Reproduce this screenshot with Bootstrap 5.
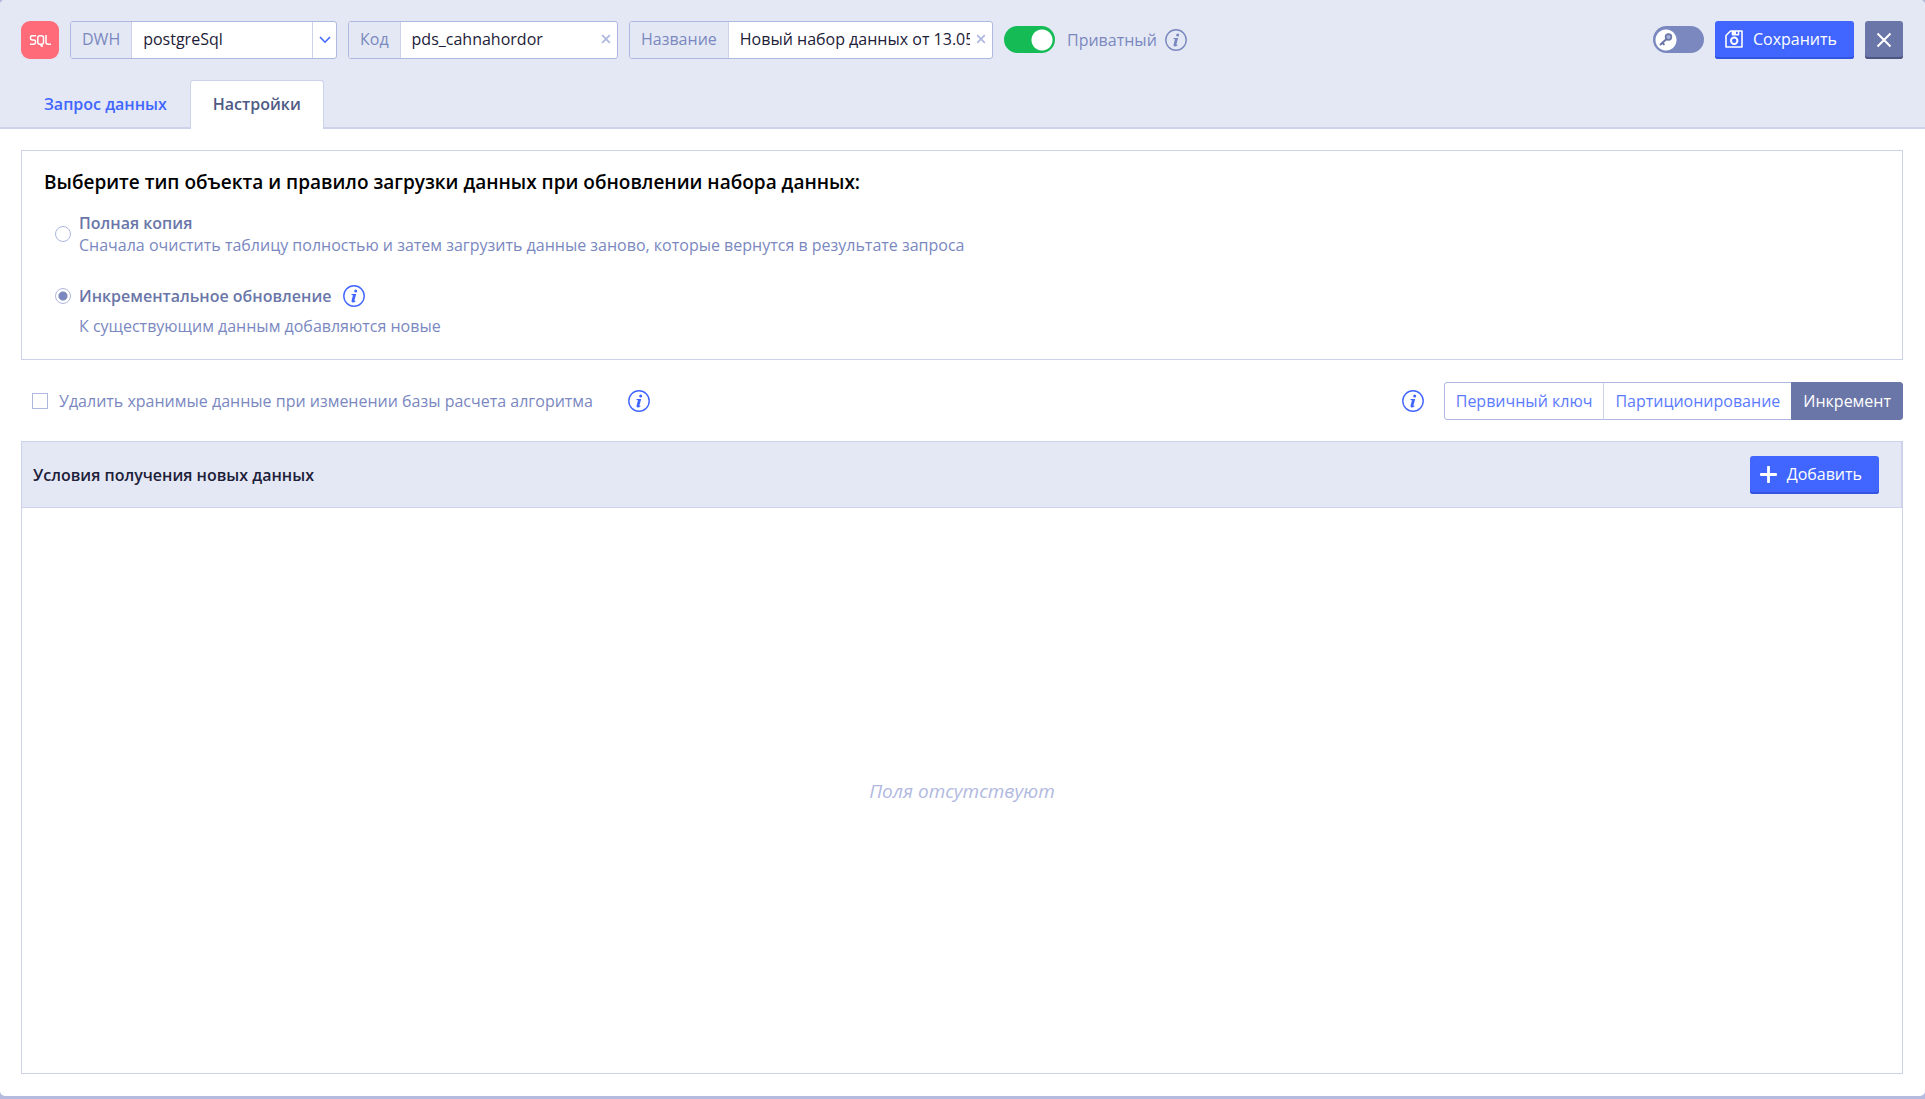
<!DOCTYPE html>
<html lang="ru">
<head>
<meta charset="utf-8">
<meta name="viewport" content="width=device-width, initial-scale=1">
<title>Набор данных — Настройки</title>
<link href="https://cdn.jsdelivr.net/npm/bootstrap@5.3.0/dist/css/bootstrap.min.css" rel="stylesheet">
<style>
:root{--line:#cbd2ea;--line-strong:#adb7df;--muted:#7a88bf;--accent:#4066ff;--slate:#6a76a8;--head:#e4e8f4}
body{font-family:"Open Sans","Noto Sans",sans-serif;font-size:16px;line-height:22px;color:#1c2038;background:#b4bbdf}
.app-window{background:#fff;border-radius:5px;min-height:calc(100vh - 3px);overflow:hidden}
.app-head{background:var(--head);border-bottom:2px solid var(--line)}
.edge{padding-left:21px;padding-right:22px}
.toolbar-row{padding-top:21px;padding-bottom:21px;gap:11px}
.sql-tile{width:38px;height:38px;border-radius:9px;background:#ff6b78}
.field-box{height:38px;border:1px solid var(--line-strong);border-radius:3px;background:#fff;overflow:hidden}
.field-box label{background:var(--head);color:var(--muted);border-right:1px solid var(--line);padding:0 11px 2px}
.field-box .form-control,.field-box .form-select{border:0;border-radius:0;padding:0 0 2px 11px;font-size:16px;color:#1c2038;background:none;box-shadow:none;height:100%;min-width:0}
.w-dwh{width:267px}.w-code{width:270px}.w-name{width:364px}
.arrow-cell{width:24px;border-left:1px solid var(--line);pointer-events:none}
.clear-btn{width:22px;border:0;background:none;padding:0 0 2px;color:var(--line-strong)}
.switch-wrap{margin-bottom:1px}
.form-switch .form-check-input.pill{width:51px;height:27px;margin:0;border:0;background-color:#15bb55;background-image:radial-gradient(circle,#fff 10px,transparent 11px);background-size:22px 22px;background-repeat:no-repeat;background-position:27px center;border-radius:14px}
.form-switch .form-check-input.pill.key-pill{background-color:var(--muted);background-position:2px center}
.key-mark{position:absolute;left:6px;top:7px;pointer-events:none}
.info-btn{border:0;background:none;padding:0;color:var(--accent);line-height:0}
.info-btn.dim{color:var(--muted)}
.btn-solid{height:38px;border:0;border-radius:3px;background:var(--accent);color:#fff;font-size:16px;line-height:22px;padding:0 17px 2px 10px;gap:10px;box-shadow:inset 0 -2px #3155e0}
.btn-solid:hover{background:#3459f0;color:#fff}
.btn-shut{width:38px;height:38px;border:0;border-radius:3px;padding:0;background:var(--slate);box-shadow:inset 0 -2px #4c5680}
.nav-tabs.main-tabs{border:0;margin-bottom:-2px}
.main-tabs .nav-link{border:1px solid transparent;border-bottom:0;border-radius:3px 3px 0 0;margin:0;padding:12px 22px 14px;height:49px;font-weight:600;color:var(--accent)}
.main-tabs .nav-link.active{background:#fff;border-color:var(--line);color:#4f5a85}
.page-body{padding-top:21px;padding-bottom:22px}
.rule-box{border:1px solid var(--line);padding:17px 22px 22px}
.rule-title{font-size:19px;line-height:28px;font-weight:600;color:#000;margin:0 0 16px}
.opt{padding-left:11px;gap:8px;color:var(--slate)}
.opt-first{margin-bottom:25px}
.opt-name{font-weight:600}
.opt-note{color:var(--muted)}
.form-check-input.tick{flex:none;width:16px;height:16px;margin:0;border-color:var(--line-strong);background-color:#fff}
.form-check-input.tick[type=radio]:checked{border-color:var(--line-strong);background-color:#fff;background-image:radial-gradient(circle,var(--muted) 4px,transparent 5px)}
.form-check-input.tick[type=checkbox]{border-radius:0}
.option-bar{margin:22px 0 21px}
.option-bar .opt{gap:11px}
.mode-group .btn{height:38px;font-size:16px;line-height:22px;padding:7px 11px;border:1px solid var(--line-strong);border-radius:3px;color:#5b7bff;background:#fff}
.mode-group .btn+.btn{border-left-color:var(--line)}
.mode-group .btn.active{background:var(--slate);color:#fff;border-color:var(--slate)}
.cond-box{border:1px solid var(--line)}
.cond-head{background:var(--head);border-bottom:1px solid var(--line);border-right:1px solid var(--line);padding:14px 22px 13px 11px}
.cond-title{font-size:16px;line-height:22px;font-weight:600;margin:0}
.empty-note{font-size:19px;line-height:28px;font-style:italic;color:#b1b9df}
</style>
</head>
<body>
<svg class="d-none" xmlns="http://www.w3.org/2000/svg">
  <symbol id="i-info" viewBox="0 0 22 22"><circle cx="11" cy="11" r="10.2" fill="none" stroke="currentColor" stroke-width="1.4"/><circle cx="12.7" cy="5.9" r="1.5" fill="currentColor"/><path d="M8.6 9.1h4.6l-1.8 6.3q-.1.6.9.2l.1.8q-1.4 1.3-2.9 1.1-1.4-.3-.9-2l1.4-5.3-1.5-.2z" fill="currentColor"/></symbol>
  <symbol id="i-clear" viewBox="0 0 10 10"><path d="M1.2 1.2l7.6 7.6M8.8 1.2L1.2 8.8" stroke="currentColor" stroke-width="1.7"/></symbol>
</svg>
<div class="app-window d-flex flex-column">
  <header class="app-head">
    <div class="toolbar-row edge d-flex align-items-center">
      <div class="sql-tile d-flex align-items-center justify-content-center flex-shrink-0">
        <svg width="23" height="13" viewBox="0 0 23 13" fill="none" stroke="#fff" stroke-width="1.5" stroke-linejoin="round" role="img" aria-label="SQL"><path d="M7 1.8H3Q1.5 1.8 1.5 3.2V4.6Q1.5 6 3 6H5Q6.5 6 6.5 7.4V8.8Q6.5 10.2 5 10.2H1M10.8 1.8H12.5Q14.5 1.8 14.5 3.8V8.2Q14.5 10.2 12.5 10.2H10.8Q8.8 10.2 8.8 8.2V3.8Q8.8 1.8 10.8 1.8M12.2 10.2V12H14M17 1V8.2Q17 10.2 19 10.2H22"/></svg>
      </div>
      <div class="field-box w-dwh d-flex">
        <label for="dwh" class="d-flex align-items-center">DWH</label>
        <select id="dwh" class="form-select"><option>postgreSql</option></select>
        <span class="arrow-cell d-flex align-items-center justify-content-center flex-shrink-0"><svg width="12" height="8" viewBox="0 0 12 8"><path d="M1 1l5 5.2L11 1" fill="none" stroke="#4066ff" stroke-width="1.6"/></svg></span>
      </div>
      <div class="field-box w-code d-flex">
        <label for="code" class="d-flex align-items-center">Код</label>
        <input id="code" class="form-control" type="text" value="pds_cahnahordor">
        <button type="button" class="clear-btn d-flex align-items-center justify-content-center flex-shrink-0" aria-label="Очистить код"><svg width="10" height="10"><use href="#i-clear"/></svg></button>
      </div>
      <div class="field-box w-name d-flex">
        <label for="title" class="d-flex align-items-center">Название</label>
        <input id="title" class="form-control" type="text" value="Новый набор данных от 13.05.2024">
        <button type="button" class="clear-btn d-flex align-items-center justify-content-center flex-shrink-0" aria-label="Очистить название"><svg width="10" height="10"><use href="#i-clear"/></svg></button>
      </div>
      <div class="form-switch switch-wrap d-flex align-items-center p-0 gap-2">
        <input class="form-check-input pill" type="checkbox" role="switch" id="private" checked>
        <label for="private" class="opt-note ps-1">Приватный</label>
        <button type="button" class="info-btn dim" aria-label="Справка о приватности"><svg width="22" height="22"><use href="#i-info"/></svg></button>
      </div>
      <div class="form-switch switch-wrap position-relative p-0 ms-auto d-flex">
        <input class="form-check-input pill key-pill" type="checkbox" role="switch" id="keymode" aria-label="Режим ключа">
        <svg class="key-mark" width="14" height="14" viewBox="0 0 14 14" fill="none" stroke="#6a76a8"><circle cx="9.5" cy="4" r="2.9" fill="#a9b2da" stroke-width="1.6"/><path d="M7.3 6.2L1.5 11.5M3.6 10l1.2 1.2" stroke-width="2" stroke-linecap="round"/></svg>
      </div>
      <button type="button" class="btn btn-solid d-flex align-items-center">
        <svg width="18" height="18" viewBox="0 0 18 18" fill="none" stroke="#fff" stroke-width="1.6" stroke-linejoin="round"><path d="M5.5 1H17V17H1V5.5z"/><path d="M7.5 1v3.7h6V1"/><path d="M8 1h3v3.5h-3z" fill="#fff" stroke="none"/><circle cx="9.2" cy="10.8" r="3.2" stroke-width="2"/></svg>
        <span>Сохранить</span>
      </button>
      <button type="button" class="btn btn-shut d-flex align-items-center justify-content-center" aria-label="Закрыть"><svg width="16" height="16" viewBox="0 0 16 16"><path d="M1.5 1.5l13 13M14.5 1.5l-13 13" stroke="#fff" stroke-width="2"/></svg></button>
    </div>
    <ul class="nav nav-tabs main-tabs edge">
      <li class="nav-item"><a class="nav-link" href="#query">Запрос данных</a></li>
      <li class="nav-item"><a class="nav-link active" href="#settings" aria-current="page">Настройки</a></li>
    </ul>
  </header>
  <main class="page-body edge d-flex flex-column flex-grow-1">
    <section class="rule-box">
      <h1 class="rule-title">Выберите тип объекта и правило загрузки данных при обновлении набора данных:</h1>
      <div class="opt opt-first d-flex align-items-center">
        <input class="form-check-input tick" type="radio" name="mode" id="m-full">
        <label for="m-full"><span class="opt-name d-block">Полная копия</span><span class="opt-note d-block">Сначала очистить таблицу полностью и затем загрузить данные заново, которые вернутся в результате запроса</span></label>
      </div>
      <div class="opt d-flex align-items-center pt-1">
        <input class="form-check-input tick" type="radio" name="mode" id="m-inc" aria-describedby="inc-note" checked>
        <label class="opt-name" for="m-inc">Инкрементальное обновление</label>
        <button type="button" class="info-btn ms-1" aria-label="Справка об обновлении"><svg width="22" height="22"><use href="#i-info"/></svg></button>
      </div>
      <div class="opt d-flex pt-2"><span class="ps-4 opt-note" id="inc-note">К существующим данным добавляются новые</span></div>
    </section>
    <div class="option-bar d-flex align-items-center justify-content-between">
      <div class="opt d-flex align-items-center">
        <input class="form-check-input tick" type="checkbox" id="purge">
        <label for="purge" class="opt-note">Удалить хранимые данные при изменении базы расчета алгоритма</label>
        <button type="button" class="info-btn ms-4" aria-label="Справка об удалении"><svg width="22" height="22"><use href="#i-info"/></svg></button>
      </div>
      <div class="d-flex align-items-center gap-3">
        <button type="button" class="info-btn me-1" aria-label="Справка о разделах"><svg width="22" height="22"><use href="#i-info"/></svg></button>
        <div class="btn-group mode-group" role="group" aria-label="Раздел">
          <button type="button" class="btn">Первичный ключ</button>
          <button type="button" class="btn">Партиционирование</button>
          <button type="button" class="btn active">Инкремент</button>
        </div>
      </div>
    </div>
    <section class="cond-box d-flex flex-column flex-grow-1">
      <div class="cond-head d-flex align-items-center justify-content-between">
        <h2 class="cond-title">Условия получения новых данных</h2>
        <button type="button" class="btn btn-solid d-flex align-items-center">
          <svg width="17" height="17" viewBox="0 0 17 17"><path d="M8.5 1v15M1 8.5h15" stroke="#fff" stroke-width="2.8" stroke-linecap="round"/></svg>
          <span>Добавить</span>
        </button>
      </div>
      <div class="empty-note flex-grow-1 d-flex align-items-center justify-content-center">Поля отсутствуют</div>
    </section>
  </main>
</div>
<script src="https://cdn.jsdelivr.net/npm/bootstrap@5.3.0/dist/js/bootstrap.bundle.min.js"></script>
</body>
</html>
